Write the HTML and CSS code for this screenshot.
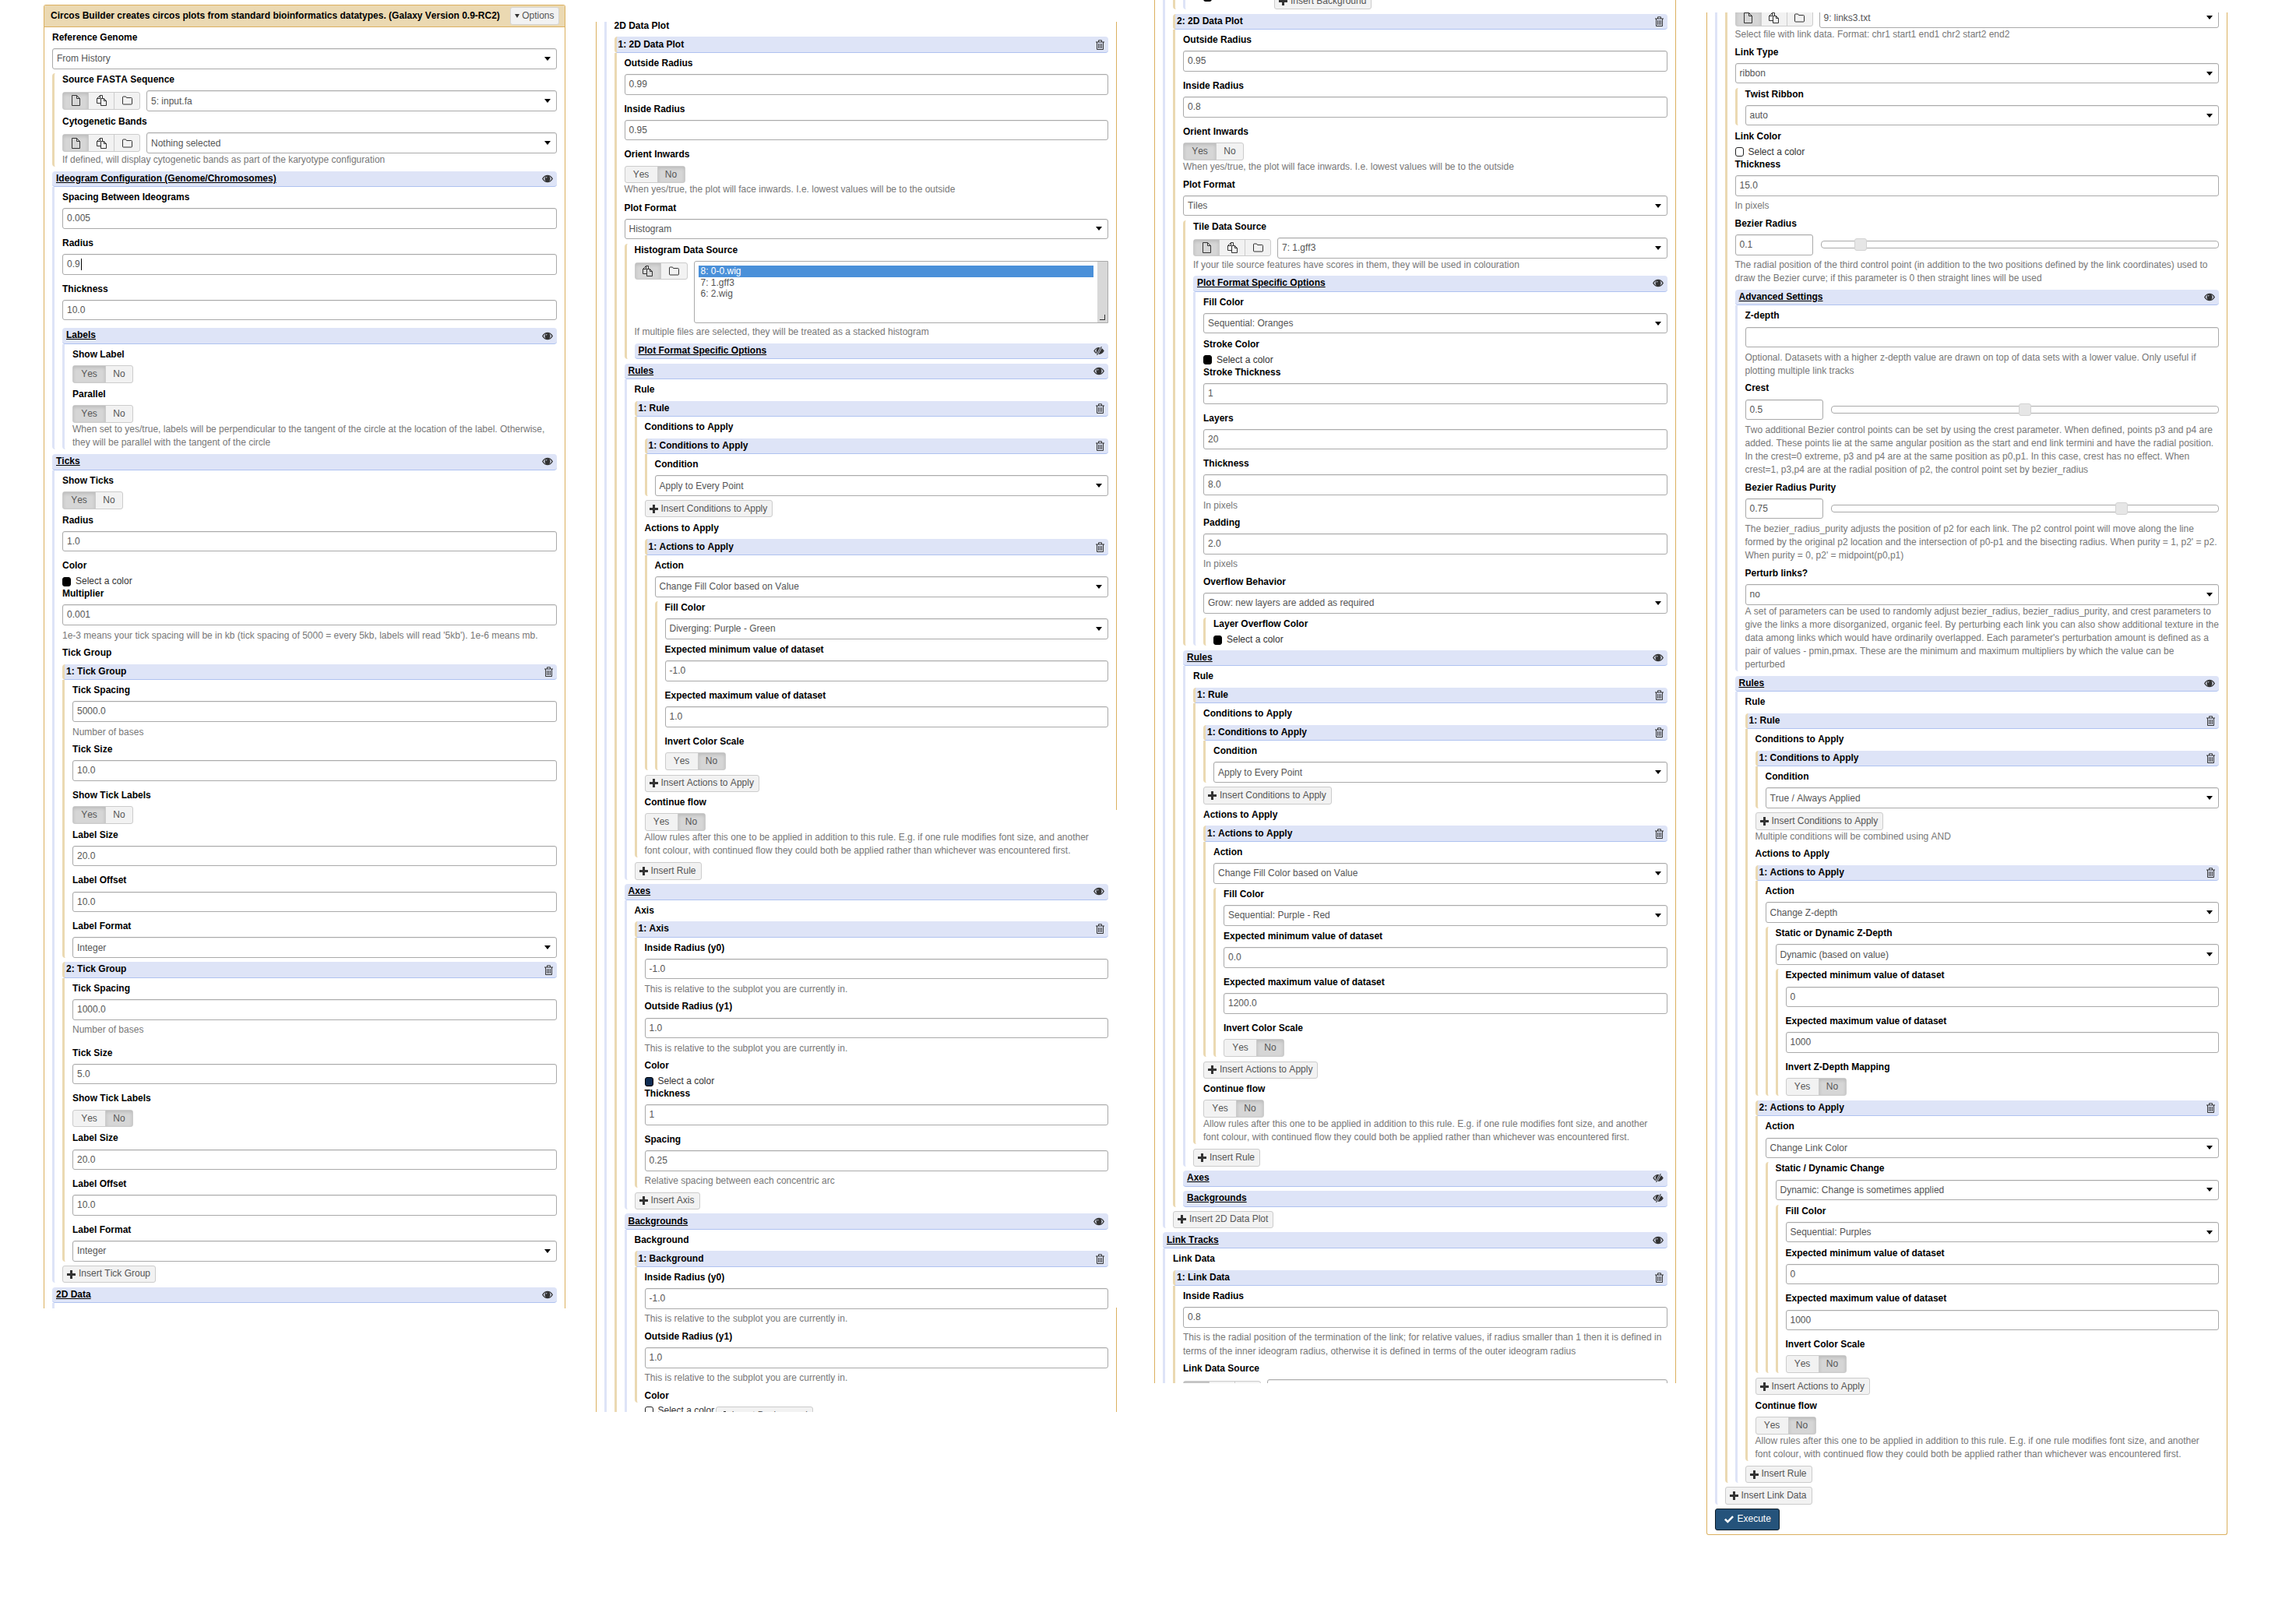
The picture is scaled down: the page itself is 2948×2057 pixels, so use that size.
FILE: index.html
```html
<!DOCTYPE html>
<html lang="en">
<head>
  <meta charset="UTF-8" />
  <title>Circos Builder</title>
  <link rel="stylesheet" href="styles.css">
</head>
<body>
  <svg class="sprite" xmlns="http://www.w3.org/2000/svg">
    <symbol id="eye" viewBox="0 0 16 12"><path fill="#333" d="M0 6C2.5 2 5 .6 8 .6S13.500 2 16 6c-2.500 4-5 5.400-8 5.400S2.500 10 0 6z"/><path fill="#dee4f7" d="M1.800 6C3.500 3.600 5 2.400 6 2 4.500 3 4 4.500 4 6s.5 3 2 4C5 9.600 3.500 8.400 1.800 6zM14.200 6C12.500 3.600 11 2.400 10 2c1.500 1 2 2.500 2 4s-.5 3-2 4c1-.4 2.500-1.600 4.200-4z"/><path fill="#dee4f7" d="M6 3.500a1.200 1.200 0 0 1 1.800 0A2 2 0 0 0 6 5.500a1.300 1.300 0 0 1 0-2z"/></symbol>
    <symbol id="eye-off" viewBox="0 0 16 13"><path fill="#333" d="M0 6.500C2.500 2.500 5 1.100 8 1.100s5.500 1.400 8 5.400c-2.500 4-5 5.400-8 5.400S2.500 10.500 0 6.500z"/><path fill="#dee4f7" d="M1.800 6.500C3.500 4.100 5 2.900 6 2.500 4.500 3.500 4 5 4 6.500s.5 3 2 4C5 10.100 3.500 8.900 1.800 6.500z"/><path fill="none" stroke="#dee4f7" stroke-width="3" d="M12 0 5 13"/><path fill="none" stroke="#333" stroke-width="1.200" d="M12 0 5 13"/></symbol>
    <symbol id="trash" viewBox="0 0 11 13"><path fill="none" stroke="#333" d="M0 3h11M3.500 3V.8h4V3M1.500 3v9.500h8V3M3.500 5v6M5.500 5v6M7.500 5v6"/></symbol>
    <symbol id="file" viewBox="0 0 11 14"><path fill="none" stroke="#333" d="M.5.500h6l4 4v9H.5zM6.500.500v4h4"/></symbol>
    <symbol id="files" viewBox="0 0 13 14"><path fill="none" stroke="#333" d="M5.500 4.500h4l3 3v6h-7zM9.500 4.500v3h3M5.500 10.500h-5v-6l4-4h3v4M4.500.500v4h-4"/></symbol>
    <symbol id="folder" viewBox="0 0 13 12"><path fill="none" stroke="#333" d="M.5 2a1 1 0 0 1 1-1h3l1 1.500h6a1 1 0 0 1 1 1v6.500a1 1 0 0 1-1 1h-10a1 1 0 0 1-1-1z"/></symbol>
    <symbol id="plus" viewBox="0 0 11 11"><path fill="#333" d="M4 0h3v4h4v3H7v4H4V7H0V4h4z"/></symbol>
    <symbol id="check" viewBox="0 0 12 10"><path fill="#fff" d="M0 5.500 1.800 3.700 4.300 6.200 10.200.2 12 2 4.300 9.800z"/></symbol>
  </svg>

  <div class="board">

    <!-- first screen -->
    <div class="col col1">
      <div class="panel">
        <div class="panel-head">
          <span class="panel-title">Circos Builder creates circos plots from standard bioinformatics datatypes. (Galaxy Version 0.9-RC2)</span>
          <span class="options"><i class="caret small"></i>Options</span>
        </div>
        <div class="panel-body">
          <div class="row"><div class="lbl">Reference Genome</div><div class="sel">From History<i class="caret"></i></div></div>
          <div class="cond">
            <div class="row"><div class="lbl">Source FASTA Sequence</div>
              <div class="src">
                <div class="grp"><span class="on"><svg class="i-file"><use href="#file"/></svg></span><span><svg class="i-files"><use href="#files"/></svg></span><span><svg class="i-folder"><use href="#folder"/></svg></span></div>
                <div class="sel">5: input.fa<i class="caret"></i></div>
              </div></div>
            <div class="row"><div class="lbl">Cytogenetic Bands</div>
              <div class="src">
                <div class="grp"><span class="on"><svg class="i-file"><use href="#file"/></svg></span><span><svg class="i-files"><use href="#files"/></svg></span><span><svg class="i-folder"><use href="#folder"/></svg></span></div>
                <div class="sel">Nothing selected<i class="caret"></i></div>
              </div>
              <div class="help">If defined, will display cytogenetic bands as part of the karyotype configuration</div></div>
          </div>

          <div class="sec">
            <div class="head"><span class="link">Ideogram Configuration (Genome/Chromosomes)</span><svg class="i-eye"><use href="#eye"/></svg></div>
            <div class="body">
              <div class="row"><div class="lbl">Spacing Between Ideograms</div><div class="in">0.005</div></div>
              <div class="row"><div class="lbl">Radius</div><div class="in">0.9<span class="cursor"></span></div></div>
              <div class="row"><div class="lbl">Thickness</div><div class="in">10.0</div></div>
              <div class="sec">
                <div class="head"><span class="link">Labels</span><svg class="i-eye"><use href="#eye"/></svg></div>
                <div class="body">
                  <div class="row t"><div class="lbl">Show Label</div><div class="toggle"><span class="on">Yes</span><span>No</span></div></div>
                  <div class="row t"><div class="lbl">Parallel</div><div class="toggle"><span class="on">Yes</span><span>No</span></div>
                    <div class="help">When set to yes/true, labels will be perpendicular to the tangent of the circle at the location of the label. Otherwise, they will be parallel with the tangent of the circle</div></div>
                </div>
              </div>
            </div>
          </div>

          <div class="sec">
            <div class="head"><span class="link">Ticks</span><svg class="i-eye"><use href="#eye"/></svg></div>
            <div class="body">
              <div class="row t"><div class="lbl">Show Ticks</div><div class="toggle"><span class="on">Yes</span><span>No</span></div></div>
              <div class="row"><div class="lbl">Radius</div><div class="in">1.0</div></div>
              <div class="row c"><div class="lbl">Color</div><div class="color"><i class="swatch"></i>Select a color</div></div>
              <div class="row"><div class="lbl">Multiplier</div><div class="in">0.001</div>
                <div class="help">1e-3 means your tick spacing will be in kb (tick spacing of 5000 = every 5kb, labels will read '5kb'). 1e-6 means mb.</div></div>
              <div class="lbl title">Tick Group</div>
              <div class="sec tan">
                <div class="head"><span>1: Tick Group</span><svg class="i-trash"><use href="#trash"/></svg></div>
                <div class="body">
                  <div class="row"><div class="lbl">Tick Spacing</div><div class="in">5000.0</div><div class="help">Number of bases</div></div>
                  <div class="row"><div class="lbl">Tick Size</div><div class="in">10.0</div></div>
                  <div class="row t"><div class="lbl">Show Tick Labels</div><div class="toggle"><span class="on">Yes</span><span>No</span></div></div>
                  <div class="row"><div class="lbl">Label Size</div><div class="in">20.0</div></div>
                  <div class="row"><div class="lbl">Label Offset</div><div class="in">10.0</div></div>
                  <div class="row"><div class="lbl">Label Format</div><div class="sel">Integer<i class="caret"></i></div></div>
                </div>
              </div>
              <div class="sec tan">
                <div class="head"><span>2: Tick Group</span><svg class="i-trash"><use href="#trash"/></svg></div>
                <div class="body">
                  <div class="row wide"><div class="lbl">Tick Spacing</div><div class="in">1000.0</div><div class="help">Number of bases</div></div>
                  <div class="row"><div class="lbl">Tick Size</div><div class="in">5.0</div></div>
                  <div class="row t"><div class="lbl">Show Tick Labels</div><div class="toggle"><span>Yes</span><span class="on">No</span></div></div>
                  <div class="row"><div class="lbl">Label Size</div><div class="in">20.0</div></div>
                  <div class="row"><div class="lbl">Label Offset</div><div class="in">10.0</div></div>
                  <div class="row"><div class="lbl">Label Format</div><div class="sel">Integer<i class="caret"></i></div></div>
                </div>
              </div>
              <div class="add"><svg class="i-plus"><use href="#plus"/></svg>Insert Tick Group</div>
            </div>
          </div>

          <div class="sec">
            <div class="head"><span class="link">2D Data</span><svg class="i-eye"><use href="#eye"/></svg></div>
            <div class="body stub"></div>
          </div>
        </div>
      </div>
    </div>

    <!-- second screen -->
    <div class="col col2">
      <div class="panel">
        <div class="panel-body">
          <div class="bar">
            <div class="lbl title">2D Data Plot</div>
            <div class="sec tan">
              <div class="head"><span>1: 2D Data Plot</span><svg class="i-trash"><use href="#trash"/></svg></div>
              <div class="body">
                <div class="row"><div class="lbl">Outside Radius</div><div class="in">0.99</div></div>
                <div class="row"><div class="lbl">Inside Radius</div><div class="in">0.95</div></div>
                <div class="row t"><div class="lbl">Orient Inwards</div><div class="toggle"><span>Yes</span><span class="on">No</span></div>
                  <div class="help">When yes/true, the plot will face inwards. I.e. lowest values will be to the outside</div></div>
                <div class="row"><div class="lbl">Plot Format</div><div class="sel">Histogram<i class="caret"></i></div></div>
                <div class="cond">
                  <div class="row"><div class="lbl">Histogram Data Source</div>
                    <div class="src">
                      <div class="grp two"><span class="on"><svg class="i-files"><use href="#files"/></svg></span><span><svg class="i-folder"><use href="#folder"/></svg></span></div>
                      <div class="multi">
                        <div class="opts"><div class="opt picked">8: 0-0.wig</div><div class="opt">7: 1.gff3</div><div class="opt">6: 2.wig</div></div>
                        <div class="grip"><i></i></div>
                      </div>
                    </div>
                    <div class="help">If multiple files are selected, they will be treated as a stacked histogram</div></div>
                  <div class="sec">
                    <div class="head"><span class="link">Plot Format Specific Options</span><svg class="i-eye"><use href="#eye-off"/></svg></div>
                  </div>
                </div>

                <div class="sec">
                  <div class="head"><span class="link">Rules</span><svg class="i-eye"><use href="#eye"/></svg></div>
                  <div class="body">
                    <div class="lbl title">Rule</div>
                    <div class="sec tan">
                      <div class="head"><span>1: Rule</span><svg class="i-trash"><use href="#trash"/></svg></div>
                      <div class="body">
                        <div class="lbl title">Conditions to Apply</div>
                        <div class="sec tan">
                          <div class="head"><span>1: Conditions to Apply</span><svg class="i-trash"><use href="#trash"/></svg></div>
                          <div class="body">
                            <div class="row"><div class="lbl">Condition</div><div class="sel">Apply to Every Point<i class="caret"></i></div></div>
                          </div>
                        </div>
                        <div class="add"><svg class="i-plus"><use href="#plus"/></svg>Insert Conditions to Apply</div>
                        <div class="lbl title">Actions to Apply</div>
                        <div class="sec tan">
                          <div class="head"><span>1: Actions to Apply</span><svg class="i-trash"><use href="#trash"/></svg></div>
                          <div class="body">
                            <div class="row"><div class="lbl">Action</div><div class="sel">Change Fill Color based on Value<i class="caret"></i></div></div>
                            <div class="cond">
                              <div class="row"><div class="lbl">Fill Color</div><div class="sel">Diverging: Purple - Green<i class="caret"></i></div></div>
                              <div class="row"><div class="lbl">Expected minimum value of dataset</div><div class="in">-1.0</div></div>
                              <div class="row"><div class="lbl">Expected maximum value of dataset</div><div class="in">1.0</div></div>
                              <div class="row t"><div class="lbl">Invert Color Scale</div><div class="toggle"><span>Yes</span><span class="on">No</span></div></div>
                            </div>
                          </div>
                        </div>
                        <div class="add"><svg class="i-plus"><use href="#plus"/></svg>Insert Actions to Apply</div>
                        <div class="row t"><div class="lbl">Continue flow</div><div class="toggle"><span>Yes</span><span class="on">No</span></div>
                          <div class="help">Allow rules after this one to be applied in addition to this rule. E.g. if one rule modifies font size, and another<br>font colour, with continued flow they could both be applied rather than whichever was encountered first.</div></div>
                      </div>
                    </div>
                    <div class="add"><svg class="i-plus"><use href="#plus"/></svg>Insert Rule</div>
                  </div>
                </div>

                <div class="sec">
                  <div class="head"><span class="link">Axes</span><svg class="i-eye"><use href="#eye"/></svg></div>
                  <div class="body">
                    <div class="lbl title">Axis</div>
                    <div class="sec tan">
                      <div class="head"><span>1: Axis</span><svg class="i-trash"><use href="#trash"/></svg></div>
                      <div class="body">
                        <div class="row"><div class="lbl">Inside Radius (y0)</div><div class="in">-1.0</div><div class="help">This is relative to the subplot you are currently in.</div></div>
                        <div class="row"><div class="lbl">Outside Radius (y1)</div><div class="in">1.0</div><div class="help">This is relative to the subplot you are currently in.</div></div>
                        <div class="row c"><div class="lbl">Color</div><div class="color"><i class="swatch navy"></i>Select a color</div></div>
                        <div class="row"><div class="lbl">Thickness</div><div class="in">1</div></div>
                        <div class="row"><div class="lbl">Spacing</div><div class="in">0.25</div><div class="help">Relative spacing between each concentric arc</div></div>
                      </div>
                    </div>
                    <div class="add"><svg class="i-plus"><use href="#plus"/></svg>Insert Axis</div>
                  </div>
                </div>

                <div class="sec">
                  <div class="head"><span class="link">Backgrounds</span><svg class="i-eye"><use href="#eye"/></svg></div>
                  <div class="body">
                    <div class="lbl title">Background</div>
                    <div class="sec tan">
                      <div class="head"><span>1: Background</span><svg class="i-trash"><use href="#trash"/></svg></div>
                      <div class="body">
                        <div class="row"><div class="lbl">Inside Radius (y0)</div><div class="in">-1.0</div><div class="help">This is relative to the subplot you are currently in.</div></div>
                        <div class="row"><div class="lbl">Outside Radius (y1)</div><div class="in">1.0</div><div class="help">This is relative to the subplot you are currently in.</div></div>
                        <div class="lbl">Color</div>
                      </div>
                    </div>
                    <div class="overrun"><i class="swatch empty"></i><span class="overrun-text">Select a color</span><div class="add"><svg class="i-plus"><use href="#plus"/></svg>Insert Background</div></div>
                  </div>
                </div>
              </div>
            </div>
          </div>
        </div>
      </div>
      <div class="line-gap"></div>
    </div>

    <!-- third screen -->
    <div class="col col3">
      <div class="panel">
        <div class="panel-body">
          <div class="bar">
            <div class="sec tan">
              <div class="body flat">
                <div class="sec">
                  <div class="body flat">
                    <div class="overrun"><i class="swatch"></i><span class="overrun-text">Select a color</span><div class="add"><svg class="i-plus"><use href="#plus"/></svg>Insert Background</div></div>
                  </div>
                </div>
              </div>
            </div>

            <div class="sec tan">
              <div class="head"><span>2: 2D Data Plot</span><svg class="i-trash"><use href="#trash"/></svg></div>
              <div class="body">
                <div class="row"><div class="lbl">Outside Radius</div><div class="in">0.95</div></div>
                <div class="row"><div class="lbl">Inside Radius</div><div class="in">0.8</div></div>
                <div class="row t"><div class="lbl">Orient Inwards</div><div class="toggle"><span class="on">Yes</span><span>No</span></div>
                  <div class="help">When yes/true, the plot will face inwards. I.e. lowest values will be to the outside</div></div>
                <div class="row"><div class="lbl">Plot Format</div><div class="sel">Tiles<i class="caret"></i></div></div>
                <div class="cond">
                  <div class="row"><div class="lbl">Tile Data Source</div>
                    <div class="src">
                      <div class="grp"><span class="on"><svg class="i-file"><use href="#file"/></svg></span><span><svg class="i-files"><use href="#files"/></svg></span><span><svg class="i-folder"><use href="#folder"/></svg></span></div>
                      <div class="sel">7: 1.gff3<i class="caret"></i></div>
                    </div>
                    <div class="help">If your tile source features have scores in them, they will be used in colouration</div></div>
                  <div class="sec">
                    <div class="head"><span class="link">Plot Format Specific Options</span><svg class="i-eye"><use href="#eye"/></svg></div>
                    <div class="body">
                      <div class="row"><div class="lbl">Fill Color</div><div class="sel">Sequential: Oranges<i class="caret"></i></div></div>
                      <div class="row c"><div class="lbl">Stroke Color</div><div class="color"><i class="swatch"></i>Select a color</div></div>
                      <div class="row"><div class="lbl">Stroke Thickness</div><div class="in">1</div></div>
                      <div class="row"><div class="lbl">Layers</div><div class="in">20</div></div>
                      <div class="row"><div class="lbl">Thickness</div><div class="in">8.0</div><div class="help">In pixels</div></div>
                      <div class="row"><div class="lbl">Padding</div><div class="in">2.0</div><div class="help">In pixels</div></div>
                      <div class="row"><div class="lbl">Overflow Behavior</div><div class="sel">Grow: new layers are added as required<i class="caret"></i></div></div>
                      <div class="cond">
                        <div class="row c"><div class="lbl">Layer Overflow Color</div><div class="color"><i class="swatch"></i>Select a color</div></div>
                      </div>
                    </div>
                  </div>
                </div>

                <div class="sec">
                  <div class="head"><span class="link">Rules</span><svg class="i-eye"><use href="#eye"/></svg></div>
                  <div class="body">
                    <div class="lbl title">Rule</div>
                    <div class="sec tan">
                      <div class="head"><span>1: Rule</span><svg class="i-trash"><use href="#trash"/></svg></div>
                      <div class="body">
                        <div class="lbl title">Conditions to Apply</div>
                        <div class="sec tan">
                          <div class="head"><span>1: Conditions to Apply</span><svg class="i-trash"><use href="#trash"/></svg></div>
                          <div class="body">
                            <div class="row"><div class="lbl">Condition</div><div class="sel">Apply to Every Point<i class="caret"></i></div></div>
                          </div>
                        </div>
                        <div class="add"><svg class="i-plus"><use href="#plus"/></svg>Insert Conditions to Apply</div>
                        <div class="lbl title">Actions to Apply</div>
                        <div class="sec tan">
                          <div class="head"><span>1: Actions to Apply</span><svg class="i-trash"><use href="#trash"/></svg></div>
                          <div class="body">
                            <div class="row"><div class="lbl">Action</div><div class="sel">Change Fill Color based on Value<i class="caret"></i></div></div>
                            <div class="cond">
                              <div class="row"><div class="lbl">Fill Color</div><div class="sel">Sequential: Purple - Red<i class="caret"></i></div></div>
                              <div class="row"><div class="lbl">Expected minimum value of dataset</div><div class="in">0.0</div></div>
                              <div class="row"><div class="lbl">Expected maximum value of dataset</div><div class="in">1200.0</div></div>
                              <div class="row t"><div class="lbl">Invert Color Scale</div><div class="toggle"><span>Yes</span><span class="on">No</span></div></div>
                            </div>
                          </div>
                        </div>
                        <div class="add"><svg class="i-plus"><use href="#plus"/></svg>Insert Actions to Apply</div>
                        <div class="row t"><div class="lbl">Continue flow</div><div class="toggle"><span>Yes</span><span class="on">No</span></div>
                          <div class="help">Allow rules after this one to be applied in addition to this rule. E.g. if one rule modifies font size, and another<br>font colour, with continued flow they could both be applied rather than whichever was encountered first.</div></div>
                      </div>
                    </div>
                    <div class="add"><svg class="i-plus"><use href="#plus"/></svg>Insert Rule</div>
                  </div>
                </div>

                <div class="sec">
                  <div class="head"><span class="link">Axes</span><svg class="i-eye"><use href="#eye-off"/></svg></div>
                </div>
                <div class="sec">
                  <div class="head"><span class="link">Backgrounds</span><svg class="i-eye"><use href="#eye-off"/></svg></div>
                </div>
              </div>
            </div>
            <div class="add"><svg class="i-plus"><use href="#plus"/></svg>Insert 2D Data Plot</div>
          </div>

          <div class="sec">
            <div class="head"><span class="link">Link Tracks</span><svg class="i-eye"><use href="#eye"/></svg></div>
            <div class="body">
              <div class="lbl title">Link Data</div>
              <div class="sec tan">
                <div class="head"><span>1: Link Data</span><svg class="i-trash"><use href="#trash"/></svg></div>
                <div class="body">
                  <div class="row"><div class="lbl">Inside Radius</div><div class="in">0.8</div>
                    <div class="help">This is the radial position of the termination of the link; for relative values, if radius smaller than 1 then it is defined in terms of the inner ideogram radius, otherwise it is defined in terms of the outer ideogram radius</div></div>
                  <div class="row"><div class="lbl">Link Data Source</div>
                    <div class="src">
                      <div class="grp"><span class="on"></span><span></span><span></span></div>
                      <div class="sel"></div>
                    </div></div>
                </div>
              </div>
            </div>
          </div>
        </div>
      </div>
    </div>

    <!-- fourth screen -->
    <div class="col col4">
      <div class="panel">
        <div class="panel-body">
          <div class="bar">
            <div class="sec tan">
              <div class="body flat">
                <div class="row">
                  <div class="src">
                    <div class="grp"><span class="on"><svg class="i-file"><use href="#file"/></svg></span><span><svg class="i-files"><use href="#files"/></svg></span><span><svg class="i-folder"><use href="#folder"/></svg></span></div>
                    <div class="sel">9: links3.txt<i class="caret"></i></div>
                  </div>
                  <div class="help">Select file with link data. Format: chr1 start1 end1 chr2 start2 end2</div></div>
                <div class="row"><div class="lbl">Link Type</div><div class="sel">ribbon<i class="caret"></i></div></div>
                <div class="cond">
                  <div class="row"><div class="lbl">Twist Ribbon</div><div class="sel">auto<i class="caret"></i></div></div>
                </div>
                <div class="row c"><div class="lbl">Link Color</div><div class="color"><i class="swatch empty"></i>Select a color</div></div>
                <div class="row"><div class="lbl">Thickness</div><div class="in">15.0</div><div class="help">In pixels</div></div>
                <div class="row"><div class="lbl">Bezier Radius</div>
                  <div class="slide"><div class="in">0.1</div><div class="track"><i style="left:10%"></i></div></div>
                  <div class="help">The radial position of the third control point (in addition to the two positions defined by the link coordinates) used to draw the Bezier curve; if this parameter is 0 then straight lines will be used</div></div>

                <div class="sec">
                  <div class="head"><span class="link">Advanced Settings</span><svg class="i-eye"><use href="#eye"/></svg></div>
                  <div class="body">
                    <div class="row"><div class="lbl">Z-depth</div><div class="in"></div>
                      <div class="help">Optional. Datasets with a higher z-depth value are drawn on top of data sets with a lower value. Only useful if plotting multiple link tracks</div></div>
                    <div class="row"><div class="lbl">Crest</div>
                      <div class="slide"><div class="in">0.5</div><div class="track"><i style="left:50%"></i></div></div>
                      <div class="help">Two additional Bezier control points can be set by using the crest parameter. When defined, points p3 and p4 are added. These points lie at the same angular position as the start and end link termini and have the radial position. In the crest=0 extreme, p3 and p4 are at the same position as p0,p1. In this case, crest has no effect. When crest=1, p3,p4 are at the radial position of p2, the control point set by bezier_radius</div></div>
                    <div class="row"><div class="lbl">Bezier Radius Purity</div>
                      <div class="slide"><div class="in">0.75</div><div class="track"><i style="left:75%"></i></div></div>
                      <div class="help">The bezier_radius_purity adjusts the position of p2 for each link. The p2 control point will move along the line formed by the original p2 location and the intersection of p0-p1 and the bisecting radius. When purity = 1, p2' = p2. When purity = 0, p2' = midpoint(p0,p1)</div></div>
                    <div class="row"><div class="lbl">Perturb links?</div><div class="sel">no<i class="caret"></i></div>
                      <div class="help">A set of parameters can be used to randomly adjust bezier_radius, bezier_radius_purity, and crest parameters to give the links a more disorganized, organic feel. By perturbing each link you can also show additional texture in the data among links which would have ordinarily overlapped. Each parameter's perturbation amount is defined as a pair of values - pmin,pmax. These are the minimum and maximum multipliers by which the value can be<br>perturbed</div></div>
                  </div>
                </div>

                <div class="sec">
                  <div class="head"><span class="link">Rules</span><svg class="i-eye"><use href="#eye"/></svg></div>
                  <div class="body">
                    <div class="lbl title">Rule</div>
                    <div class="sec tan">
                      <div class="head"><span>1: Rule</span><svg class="i-trash"><use href="#trash"/></svg></div>
                      <div class="body">
                        <div class="lbl title">Conditions to Apply</div>
                        <div class="sec tan">
                          <div class="head"><span>1: Conditions to Apply</span><svg class="i-trash"><use href="#trash"/></svg></div>
                          <div class="body">
                            <div class="row"><div class="lbl">Condition</div><div class="sel">True / Always Applied<i class="caret"></i></div></div>
                          </div>
                        </div>
                        <div class="add tight"><svg class="i-plus"><use href="#plus"/></svg>Insert Conditions to Apply</div>
                        <div class="help under">Multiple conditions will be combined using AND</div>
                        <div class="lbl title">Actions to Apply</div>
                        <div class="sec tan">
                          <div class="head"><span>1: Actions to Apply</span><svg class="i-trash"><use href="#trash"/></svg></div>
                          <div class="body">
                            <div class="row"><div class="lbl">Action</div><div class="sel">Change Z-depth<i class="caret"></i></div></div>
                            <div class="cond">
                              <div class="row"><div class="lbl">Static or Dynamic Z-Depth</div><div class="sel">Dynamic (based on value)<i class="caret"></i></div></div>
                              <div class="cond">
                                <div class="row"><div class="lbl">Expected minimum value of dataset</div><div class="in">0</div></div>
                                <div class="row"><div class="lbl">Expected maximum value of dataset</div><div class="in">1000</div></div>
                                <div class="row t"><div class="lbl">Invert Z-Depth Mapping</div><div class="toggle"><span>Yes</span><span class="on">No</span></div></div>
                              </div>
                            </div>
                          </div>
                        </div>
                        <div class="sec tan">
                          <div class="head"><span>2: Actions to Apply</span><svg class="i-trash"><use href="#trash"/></svg></div>
                          <div class="body">
                            <div class="row"><div class="lbl">Action</div><div class="sel">Change Link Color<i class="caret"></i></div></div>
                            <div class="cond">
                              <div class="row"><div class="lbl">Static / Dynamic Change</div><div class="sel">Dynamic: Change is sometimes applied<i class="caret"></i></div></div>
                              <div class="cond">
                                <div class="row"><div class="lbl">Fill Color</div><div class="sel">Sequential: Purples<i class="caret"></i></div></div>
                                <div class="row"><div class="lbl">Expected minimum value of dataset</div><div class="in">0</div></div>
                                <div class="row"><div class="lbl">Expected maximum value of dataset</div><div class="in">1000</div></div>
                                <div class="row t"><div class="lbl">Invert Color Scale</div><div class="toggle"><span>Yes</span><span class="on">No</span></div></div>
                              </div>
                            </div>
                          </div>
                        </div>
                        <div class="add"><svg class="i-plus"><use href="#plus"/></svg>Insert Actions to Apply</div>
                        <div class="row t"><div class="lbl">Continue flow</div><div class="toggle"><span>Yes</span><span class="on">No</span></div>
                          <div class="help">Allow rules after this one to be applied in addition to this rule. E.g. if one rule modifies font size, and another<br>font colour, with continued flow they could both be applied rather than whichever was encountered first.</div></div>
                      </div>
                    </div>
                    <div class="add"><svg class="i-plus"><use href="#plus"/></svg>Insert Rule</div>
                  </div>
                </div>
              </div>
            </div>
            <div class="add"><svg class="i-plus"><use href="#plus"/></svg>Insert Link Data</div>
          </div>
          <div class="execute"><svg class="i-check"><use href="#check"/></svg>Execute</div>
        </div>
      </div>
    </div>

  </div>
</body>
</html>
```

FILE: styles.css
```css
body {
  margin: 0;
  background: #fff;
  font-family: "Liberation Sans", Arial, sans-serif;
  font-size: 12px;
  font-kerning: none;
  line-height: 1.42857;
  color: #000;
}
.sprite {
  display: none;
}
.board {
  display: flex;
  align-items: flex-start;
  height: 2057px;
  overflow: hidden;
}

/* the four screens */
.col {
  position: relative;
  flex: none;
  width: 669.5px;
  overflow: hidden;
}
.col1 { margin: 6px 0 0 56px; height: 1674px; }
.col2 { margin: 28px 0 0 39px; height: 1785px; }
.col3 { margin: 0 0 0 48px; height: 1776px; }
.col4 { margin: 16px 0 0 39px; }

.col2 .panel-body { margin-top: -3px; padding-top: 0; }
.col3 .panel-body { margin-top: -10px; padding-top: 0; }
.col4 .panel-body { margin-top: -11.5px; padding-top: 0; }

.line-gap {
  position: absolute;
  top: 1012px;
  right: 0;
  width: 2px;
  height: 639px;
  background: #fff;
}

/* panel */
.panel {
  box-sizing: border-box;
  min-height: 100%;
  border: 1px solid #dbb05f;
  border-radius: 3px;
}
.col1 .panel { border-bottom: 0; }
.col2 .panel, .col3 .panel { border-top: 0; border-bottom: 0; }
.col4 .panel { border-top: 0; }
.panel-head {
  display: flex;
  justify-content: space-between;
  align-items: center;
  height: 27px;
  padding: 0 7px 0 8px;
  background: #ebd9b2;
  border-bottom: 1px solid #dbb05f;
}
.panel-title {
  font-weight: bold;
}
.options {
  display: flex;
  align-items: center;
  height: 21px;
  padding: 0 5px;
  background: #f2f2f2;
  border: 1px solid #d5d5d5;
  border-radius: 3px;
  color: #555;
}
.panel-body {
  padding: 5px 10px 5px;
}

/* sections */
.sec {
  margin-bottom: 5.4px;
}
.head {
  box-sizing: border-box;
  display: flex;
  justify-content: space-between;
  align-items: center;
  height: 20.6px;
  padding: 0 5px 0 5px;
  background: #dee4f7;
  border-bottom: 1px solid #afc2f0;
  border-radius: 4px;
  font-weight: bold;
}
.link {
  text-decoration: underline;
}
.sec.tan > .head {
  padding-left: 2px;
  border-left: 3px solid #ebd9b2;
}
.body {
  padding: 5px 0 0 10px;
  border-left: 3px solid #dee4f7;
  border-bottom-left-radius: 4px;
}
.sec.tan > .body {
  border-left-color: #ebd9b2;
}
.body.flat {
  padding-top: 0;
}
.body.stub {
  height: 30px;
}
.bar {
  padding-left: 10px;
  border-left: 3px solid #dee4f7;
  border-bottom-left-radius: 4px;
  margin-bottom: 5.4px;
}
.cond {
  padding-left: 10px;
  border-left: 3px solid #ebd9b2;
  border-radius: 4px 0 0 4px;
  margin-bottom: 5.4px;
}
.body > :last-child, .cond > :last-child, .bar > :last-child {
  margin-bottom: 0;
}

/* rows */
.row {
  display: flow-root;
  margin-bottom: 5.4px;
}
.row.t {
  margin-bottom: 6px;
}
.row.c {
  margin-bottom: 0;
}
.row.wide {
  margin-bottom: 12.4px;
}
.lbl {
  font-weight: bold;
}
.title {
  margin-bottom: 5.3px;
}
.help {
  color: #777;
}
.help.under {
  margin: -5.4px 0 5.4px;
}

.in, .sel {
  box-sizing: border-box;
  height: 26.6px;
  margin-top: 5px;
  padding: 0 5px;
  background: #fff;
  border: 1px solid #aaa;
  border-radius: 3px;
  box-shadow: inset 0 1px 1px rgba(0, 0, 0, .075);
  color: #555;
  line-height: 24px;
}
.in {
  margin-bottom: 4.6px;
}
.cursor {
  display: inline-block;
  width: 1px;
  height: 15px;
  margin-left: 1px;
  background: #000;
  vertical-align: middle;
}
.sel {
  display: flex;
  justify-content: space-between;
  align-items: center;
}
.caret {
  display: block;
  width: 0;
  height: 0;
  margin-right: 2px;
  border-left: 4px solid transparent;
  border-right: 4px solid transparent;
  border-top: 5px solid #000;
}
.caret.small {
  margin-right: 3px;
  border-left-width: 3.5px;
  border-right-width: 3.5px;
  border-top: 5px solid #333;
}

/* source picker */
.src {
  display: flex;
  gap: 8px;
  align-items: flex-start;
}
.src .sel {
  flex: 1;
}
.grp {
  box-sizing: border-box;
  flex: none;
  display: flex;
  width: 100px;
  height: 22.4px;
  margin-top: 7px;
  background: #f2f2f2;
  border: 1px solid #ccc;
  border-radius: 3px;
}
.grp span {
  flex: 1;
  display: flex;
  justify-content: center;
  align-items: center;
  border-left: 1px solid #ccc;
}
.grp span:first-child {
  border-left: 0;
}
.grp .on, .toggle .on {
  background: #d6d6d6;
  box-shadow: inset 0 2px 4px rgba(0, 0, 0, .13);
}
.grp.two {
  width: 68px;
}
.multi {
  box-sizing: border-box;
  flex: 1;
  display: flex;
  height: 80.6px;
  margin: 5px 0 2.6px;
  border: 1px solid #aaa;
  border-radius: 3px 0 0 3px;
  color: #555;
}
.opts {
  flex: 1;
  padding: 5px 5px 0 5px;
}
.opt {
  padding-left: 3px;
  height: 14px;
  line-height: 14px;
}
.opt.picked {
  height: 15px;
  margin-bottom: 0;
  background: #4a90d9;
  color: #fff;
}
.grip {
  position: relative;
  width: 13px;
  background: #d8d8d8;
}
.grip i {
  position: absolute;
  right: 3px;
  bottom: 3px;
  width: 6px;
  height: 6px;
  border-right: 1px solid #333;
  border-bottom: 1px solid #333;
}

/* toggle */
.toggle {
  box-sizing: border-box;
  display: flex;
  width: 78px;
  height: 22.8px;
  margin-top: 5px;
  background: #f2f2f2;
  border: 1px solid #ccc;
  border-radius: 3px;
  color: #555;
  line-height: 20px;
  text-align: center;
}
.toggle span:first-child {
  width: 41px;
}
.toggle span:last-child {
  flex: 1;
  border-left: 1px solid #ccc;
}

/* color field */
.color {
  box-sizing: border-box;
  display: flex;
  align-items: center;
  height: 18.9px;
  padding-top: 4px;
  color: #333;
}
.swatch {
  flex: none;
  box-sizing: border-box;
  width: 11px;
  height: 12px;
  margin-right: 6px;
  background: #000;
  border: 1px solid #000;
  border-radius: 3px;
}
.swatch.navy {
  background: #0f2c52;
}
.swatch.empty {
  background: #fff;
  border-color: #222;
}

/* the color field runs over the insert button below it */
.overrun {
  display: flex;
  align-items: flex-start;
  margin-left: 13px;
}
.overrun .add {
  margin-bottom: 0;
}
.overrun-text {
  width: 74px;
  margin-top: -3px;
  color: #333;
  white-space: nowrap;
}

/* slider */
.slide {
  display: flex;
  gap: 10px;
  align-items: center;
}
.slide .in {
  flex: none;
  width: 100px;
}
.track {
  position: relative;
  flex: 1;
  box-sizing: border-box;
  height: 10px;
  background: #fff;
  border: 1px solid #aaa;
  border-radius: 4px;
}
.track i {
  position: absolute;
  top: -4px;
  box-sizing: border-box;
  width: 16px;
  height: 16px;
  margin-left: -8px;
  background: #e6e6e6;
  border: 1px solid #d3d3d3;
  border-radius: 3px;
}

/* buttons */
.add {
  box-sizing: border-box;
  display: flex;
  align-items: center;
  width: fit-content;
  height: 22.2px;
  margin-bottom: 5.4px;
  padding: 0 6px 0 5px;
  background: #f2f2f2;
  border: 1px solid #ccc;
  border-radius: 3px;
  color: #555;
  white-space: nowrap;
}
.execute {
  box-sizing: border-box;
  display: flex;
  align-items: center;
  width: 83px;
  height: 27.6px;
  padding-left: 11px;
  background: #25537b;
  border: 1px solid #0d1b26;
  border-radius: 3px;
  color: #fff;
}

/* icons */
.i-eye { width: 14px; height: 11px; flex: none; }
.i-trash { width: 11px; height: 13px; flex: none; }
.i-file { width: 11px; height: 14px; }
.i-files { width: 13px; height: 14px; }
.i-folder { width: 13px; height: 12px; }
.i-plus { width: 11px; height: 11px; margin-right: 4px; flex: none; }
.i-check { width: 12px; height: 10px; margin-right: 5px; flex: none; }
```
